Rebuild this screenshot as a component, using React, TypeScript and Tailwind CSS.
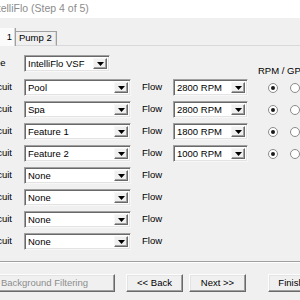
import React from "react";

const font = { fontFamily: '"Liberation Sans", Arial, sans-serif' };

function Combo({ value, width }: { value: string; width: string }) {
  return (
    <div
      className={`${width} h-[17px] shrink-0 flex items-center bg-white border border-t-[#a0a0a0] border-l-[#a0a0a0] border-r-[#f7f7f7] border-b-[#f7f7f7] shadow-[inset_1px_1px_0_#696969,inset_-1px_-1px_0_#e3e3e3] p-[2px]`}
    >
      <span className="flex-1 pl-[1px] leading-none text-black whitespace-nowrap overflow-hidden">{value}</span>
      <div className="w-[14px] h-full flex items-center justify-center bg-[#f0f0f0] border border-t-[#f7f7f7] border-l-[#f7f7f7] border-r-[#696969] border-b-[#696969] shadow-[inset_-1px_-1px_0_#a0a0a0]">
        <svg width="7" height="4" viewBox="0 0 7 4">
          <path d="M0 0h7L3.5 4z" fill="#000" />
        </svg>
      </div>
    </div>
  );
}

function Radio({ checked }: { checked?: boolean }) {
  return (
    <div className="w-[10px] h-[10px] rounded-full border border-[#8a8a8a] bg-white flex items-center justify-center shrink-0">
      {checked && <div className="w-[4px] h-[4px] rounded-full bg-[#1a1a1a]" />}
    </div>
  );
}

function Button({ label, className }: { label: string; className: string }) {
  return (
    <div
      className={`${className} h-[18px] shrink-0 flex items-center justify-center whitespace-nowrap bg-[#f0f0f0] border border-t-[#fdfdfd] border-l-[#fdfdfd] border-r-[#696969] border-b-[#696969] shadow-[inset_-1px_-1px_0_#a0a0a0,inset_1px_1px_0_#e3e3e3]`}
    >
      {label}
    </div>
  );
}

const circuits = [
  { name: "Pool", flow: "2800 RPM" },
  { name: "Spa", flow: "2800 RPM" },
  { name: "Feature 1", flow: "1800 RPM" },
  { name: "Feature 2", flow: "1000 RPM" },
  { name: "None" },
  { name: "None" },
  { name: "None" },
  { name: "None" },
];

export default function App() {
  return (
    <div className="w-[300px] h-[300px] overflow-hidden bg-[#f0f0f0] text-[9.5px] text-black flex flex-col" style={font}>
      <div className="h-[18px] shrink-0 bg-white flex items-center">
        <span className="ml-[-11px] text-[10.5px] text-[#8c8c8c] whitespace-nowrap">IntelliFlo (Step 4 of 5)</span>
      </div>

      <div className="mt-[10px] h-[18px] flex items-end shrink-0">
        <div className="w-[16px] h-[18px] bg-[#fbfbfb] border-r border-[#a0a0a0] flex items-center justify-end pr-[3px] shadow-[inset_-1px_0_0_#d8d8d8]">
          1
        </div>
        <div className="w-[41px] h-[15px] border-t border-r border-[#a0a0a0] border-b border-b-[#d9d9d9] flex items-center pl-[3px] shadow-[inset_-1px_0_0_#d8d8d8]">
          Pump 2
        </div>
        <div className="flex-1 h-full border-b border-[#d9d9d9]" />
      </div>

      <div className="mt-[9px] flex items-start h-[17px] shrink-0">
        <div className="ml-[-15px] w-[39px] h-[17px] flex items-center shrink-0">Type</div>
        <Combo value="IntelliFlo VSF" width="w-[86px]" />
        <div className="ml-[148px] mt-[11px] whitespace-nowrap leading-none">RPM / GPM</div>
      </div>

      <div className="mt-[7px] flex flex-col gap-[5px]">
        {circuits.map((c, i) => (
          <div key={i} className="flex items-center h-[17px]">
            <div className="ml-[-15px] w-[39px] shrink-0">Circuit</div>
            <Combo value={c.name} width="w-[107px]" />
            <div className="w-[42px] pl-[11px] shrink-0">Flow</div>
            {c.flow && (
              <>
                <Combo value={c.flow} width="w-[75px]" />
                <div className="ml-[20px] flex gap-[12px]">
                  <Radio checked />
                  <Radio />
                </div>
              </>
            )}
          </div>
        ))}
      </div>

      <div className="mt-[11px] h-[2px] shrink-0 border-t border-[#a0a0a0] border-b border-b-[#ffffff]" />

      <div className="mt-[11px] flex items-center">
        <Button label="Background Filtering" className="ml-[-26px] w-[141px] text-[#8d8d8d]" />
        <Button label="<< Back" className="ml-[11px] w-[57px]" />
        <Button label="Next >>" className="ml-[6px] w-[57px]" />
        <Button label="Finish" className="ml-[22px] w-[46px]" />
      </div>
    </div>
  );
}
